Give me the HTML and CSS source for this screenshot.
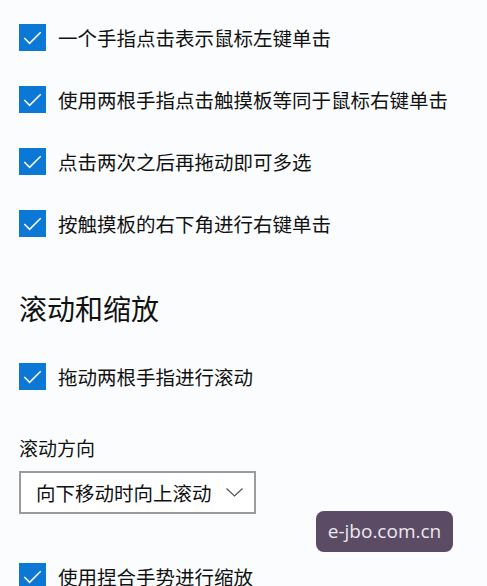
FILE: index.html
```html
<!DOCTYPE html>
<html lang="zh-CN">
<head>
<meta charset="utf-8">
<link rel="stylesheet" href="styles.css">
</head>
<body>
<div class="page">
  <div class="opts">
    <div class="opt"><span class="cb"><svg viewBox="0 0 28 28"><path d="M5.5 14.5 L11 20 L22.5 8.5"/></svg></span><span class="lbl">一个手指点击表示鼠标左键单击</span></div>
    <div class="opt"><span class="cb"><svg viewBox="0 0 28 28"><path d="M5.5 14.5 L11 20 L22.5 8.5"/></svg></span><span class="lbl">使用两根手指点击触摸板等同于鼠标右键单击</span></div>
    <div class="opt"><span class="cb"><svg viewBox="0 0 28 28"><path d="M5.5 14.5 L11 20 L22.5 8.5"/></svg></span><span class="lbl">点击两次之后再拖动即可多选</span></div>
    <div class="opt"><span class="cb"><svg viewBox="0 0 28 28"><path d="M5.5 14.5 L11 20 L22.5 8.5"/></svg></span><span class="lbl">按触摸板的右下角进行右键单击</span></div>
  </div>
  <h2 class="heading">滚动和缩放</h2>
  <div class="opt"><span class="cb"><svg viewBox="0 0 28 28"><path d="M5.5 14.5 L11 20 L22.5 8.5"/></svg></span><span class="lbl">拖动两根手指进行滚动</span></div>
  <div class="field-label">滚动方向</div>
  <div class="select"><span class="sel-text">向下移动时向上滚动</span><svg class="chev" viewBox="0 0 17 9"><path d="M0.5 0.5 L8.5 8 L16.5 0.5"/></svg></div>
  <div class="opt last"><span class="cb"><svg viewBox="0 0 28 28"><path d="M5.5 14.5 L11 20 L22.5 8.5"/></svg></span><span class="lbl">使用捏合手势进行缩放</span></div>
</div>
<div class="watermark">e-jbo.com.cn</div>
</body>
</html>
```

FILE: styles.css
```css
html, body {
  margin: 0;
  padding: 0;
  background: #fafcfd;
  overflow: hidden;
}
body {
  width: 487px;
  height: 586px;
  position: relative;
  font-family: "Noto Sans CJK SC", "Noto Sans", sans-serif;
  color: #111;
}
.page {
  padding: 24px 0 0 19px;
}
.opts {
  display: flex;
  flex-direction: column;
  gap: 35px;
}
.opt {
  display: flex;
  align-items: center;
  gap: 12px;
  height: 27px;
}
.cb {
  width: 27px;
  height: 27px;
  background: #0a78d4;
  flex: none;
  display: block;
}
.cb svg {
  width: 27px;
  height: 27px;
  display: block;
}
.cb path {
  fill: none;
  stroke: #fff;
  stroke-width: 1.6;
}
.lbl {
  font-size: 19.5px;
  line-height: 27px;
  white-space: nowrap;
}
.heading {
  margin: 51px 0 0 0;
  font-size: 28px;
  font-weight: 400;
  line-height: 40px;
  height: 40px;
  margin-bottom: 35px;
}
.field-label {
  margin-top: 45px;
  font-size: 19px;
  line-height: 26px;
}
.select {
  margin-top: 10px;
  width: 237px;
  height: 43px;
  box-sizing: border-box;
  border: 2px solid #9b9b9b;
  background: #fff;
  display: flex;
  align-items: center;
  padding-left: 15px;
  gap: 14px;
}
.sel-text {
  font-size: 19.5px;
  line-height: 26px;
  white-space: nowrap;
}
.chev {
  width: 17px;
  height: 9px;
  flex: none;
}
.chev path {
  fill: none;
  stroke: #555;
  stroke-width: 1.2;
}
.opt.last {
  margin-top: 49px;
}
.watermark {
  position: absolute;
  left: 316px;
  top: 511px;
  width: 137px;
  height: 41px;
  border-radius: 8px;
  background: #5b4b64;
  color: #ece8ef;
  font-family: "Open Sans", "Noto Sans", sans-serif;
  font-size: 19px;
  line-height: 41px;
  text-align: center;
}
```
